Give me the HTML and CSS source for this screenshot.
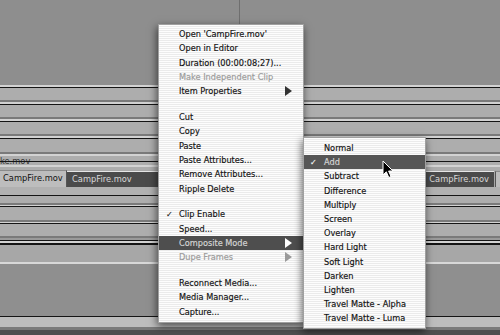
FILE: index.html
```html
<!DOCTYPE html>
<html>
<head>
<meta charset="utf-8">
<link rel="stylesheet" href="styles.css">
</head>
<body>
<div class="timeline">
  <div class="top">
    <div class="pane-left"></div>
    <div class="pane-right"></div>
  </div>
  <div class="s lt h2"></div><div class="s bk h1"></div><div class="s bd h12"></div><div class="s dk h2"></div>
  <div class="s lt h2"></div><div class="s bk h1"></div><div class="s bd h12"></div><div class="s dk h2"></div>
  <div class="s lt h2"></div><div class="s bk h1"></div><div class="s bd h12"></div><div class="s dk h2"></div>
  <div class="s lt h2"></div><div class="s bk h1"></div><div class="s bd h13"></div><div class="s dk h2"></div>
  <div class="s lt h2"></div>
  <div class="s bd label-row"><span class="label">ke.mov</span></div>
  <div class="s lt h2"></div><div class="s bd h3"></div>
  <div class="clip-row">
    <div class="clip clip-light">CampFire.mov</div>
    <div class="clip clip-dark">CampFire.mov</div>
    <div class="clip-gap"></div>
    <div class="clip clip-dark clip-end">CampFire.mov</div>
    <div class="clip clip-stub"></div>
  </div>
  <div class="s bd2 h8"></div><div class="s bk h1"></div><div class="s bd h7"></div><div class="s dk h2"></div>
  <div class="s lt h1"></div><div class="s bk h1"></div><div class="s bd h13"></div><div class="s dk h2"></div>
  <div class="s lt h1"></div><div class="s bk h1"></div><div class="s bd h12"></div><div class="s dk h2"></div>
  <div class="s md h2"></div><div class="s bk h1"></div><div class="s lt h2"></div><div class="s bk h2"></div>
  <div class="s bd3 h17"></div><div class="s lt2 h2"></div>
  <div class="s area h52"></div>
  <div class="s bk h1"></div><div class="s lband h10"></div><div class="s dk h3"></div><div class="s bottom h5"></div>
</div>

<ul class="menu main-menu">
  <li class="item">Open 'CampFire.mov'</li>
  <li class="item">Open in Editor</li>
  <li class="item">Duration (00:00:08;27)...</li>
  <li class="item disabled">Make Independent Clip</li>
  <li class="item">Item Properties<span class="arrow"></span></li>
  <li class="sep"></li>
  <li class="item">Cut</li>
  <li class="item">Copy</li>
  <li class="item">Paste</li>
  <li class="item">Paste Attributes...</li>
  <li class="item">Remove Attributes...</li>
  <li class="item">Ripple Delete</li>
  <li class="sep"></li>
  <li class="item checked"><span class="check">✓</span>Clip Enable</li>
  <li class="item">Speed...</li>
  <li class="item active">Composite Mode<span class="arrow"></span></li>
  <li class="item disabled">Dupe Frames<span class="arrow"></span></li>
  <li class="sep"></li>
  <li class="item">Reconnect Media...</li>
  <li class="item">Media Manager...</li>
  <li class="item">Capture...</li>
</ul>

<ul class="menu sub-menu">
  <li class="item">Normal</li>
  <li class="item active checked"><span class="check">✓</span>Add</li>
  <li class="item">Subtract</li>
  <li class="item">Difference</li>
  <li class="item">Multiply</li>
  <li class="item">Screen</li>
  <li class="item">Overlay</li>
  <li class="item">Hard Light</li>
  <li class="item">Soft Light</li>
  <li class="item">Darken</li>
  <li class="item">Lighten</li>
  <li class="item">Travel Matte - Alpha</li>
  <li class="item">Travel Matte - Luma</li>
</ul>

<svg class="cursor" width="12" height="19" viewBox="0 0 12 19">
  <path d="M1 1 L1 15 L4.3 11.8 L6.8 17.5 L9 16.5 L6.6 11 L11 11 Z" fill="#000" stroke="#fff" stroke-width="1" stroke-linejoin="round"/>
</svg>
</body>
</html>
```

FILE: styles.css
```css
html, body {
  margin: 0;
  padding: 0;
}
body {
  width: 500px;
  height: 335px;
  overflow: hidden;
  position: relative;
  background: #8e8e8e;
  font-family: "DejaVu Sans", "Liberation Sans", sans-serif;
}
.timeline {
  display: flex;
  flex-direction: column;
  width: 500px;
  height: 335px;
}
.top {
  display: flex;
  height: 85px;
  background: #8e8e8e;
}
.pane-left {
  width: 239px;
  border-right: 1px solid #6f6f6f;
}
.pane-right {
  flex: 1;
}
.s { flex: none; }
.lt { background: #d2d2d2; }
.lt2 { background: #d8d8d8; }
.bk { background: #151515; }
.bd { background: #adadad; }
.bd2 { background: #b1b1b1; }
.bd3 { background: #a7a7a7; }
.dk { background: #7a7a7a; }
.md { background: #9a9a9a; }
.area { background: #8f8f8f; }
.lband { background: #bdbdbd; }
.bottom { background: #4f4f4f; }
.h1 { height: 1px; }
.h2 { height: 2px; }
.h3 { height: 3px; }
.h5 { height: 5px; }
.h7 { height: 7px; }
.h8 { height: 8px; }
.h10 { height: 10px; }
.h12 { height: 12px; }
.h13 { height: 13px; }
.h17 { height: 17px; }
.h52 { height: 52px; }

.label-row {
  height: 9px;
  position: relative;
}
.label {
  display: block;
  font-size: 8.3px;
  line-height: 9px;
  color: #333;
  padding-top: 1px;
}
.label-row::after {
  content: "";
  position: absolute;
  left: 0;
  right: 0;
  top: 5px;
  height: 1px;
  background: #151515;
}

.clip-row {
  flex: none;
  height: 17px;
  display: flex;
  background: #a9a9a9;
}
.clip {
  box-sizing: border-box;
  font-size: 8.3px;
  line-height: 15px;
  white-space: nowrap;
  overflow: hidden;
}
.clip-light {
  width: 67px;
  background: #bdbdbd;
  color: #111;
  border-top: 1px solid #8a8a8a;
  border-right: 1px solid #555;
  padding-left: 3px;
}
.clip-dark {
  width: 190px;
  margin-top: 1px;
  background: #4b4b4b;
  color: #d8d8d8;
  border-top: 1px solid #e6e6e6;
  padding-left: 5px;
  line-height: 14px;
}
.clip-gap {
  flex: 1;
}
.clip-end {
  width: 90px;
  text-align: right;
  padding-left: 0;
  padding-right: 5px;
}
.clip-stub {
  width: 5px;
  margin-left: 1px;
  margin-top: 1px;
  background: #bdbdbd;
  border-left: 1px solid #555;
  border-top: 1px solid #8a8a8a;
}

.menu {
  position: absolute;
  margin: 0;
  list-style: none;
  box-sizing: border-box;
  background: repeating-linear-gradient(to bottom, #fdfdfd 0, #fdfdfd 1px, #ebebeb 1px, #ebebeb 2px);
  border: 1px solid #a0a0a0;
  box-shadow: -1px 3px 8px rgba(0, 0, 0, 0.6);
  font-size: 8.2px;
  color: #111;
  -webkit-text-stroke: 0.15px currentColor;
}
.main-menu {
  left: 158px;
  top: 24px;
  width: 146px;
  padding: 2px 0 3px;
}
.sub-menu {
  left: 303px;
  top: 137px;
  width: 123px;
  padding: 3px 0 3px;
}
.item {
  position: relative;
  display: flex;
  align-items: center;
  height: 14.3px;
  padding-left: 20px;
  white-space: nowrap;
}
.sub-menu .item {
  height: 14.2px;
}
.sep {
  height: 11.5px;
}
.disabled {
  color: #9a9a9a;
}
.active {
  background: #4e4e4e;
  color: #d6d6d6;
}
.sub-menu .active {
  background: #565656;
}
.check {
  position: absolute;
  left: 7px;
  font-size: 8px;
}
.sub-menu .check {
  left: 6px;
}
.active .check {
  color: #fff;
}
.arrow {
  margin-left: auto;
  margin-right: 11px;
  width: 0;
  height: 0;
  border-top: 5px solid transparent;
  border-bottom: 5px solid transparent;
  border-left: 7px solid #333;
}
.active .arrow {
  border-left-color: #fff;
}
.disabled .arrow {
  border-left-color: #9a9a9a;
}
.cursor {
  position: absolute;
  left: 382px;
  top: 160px;
}
```
